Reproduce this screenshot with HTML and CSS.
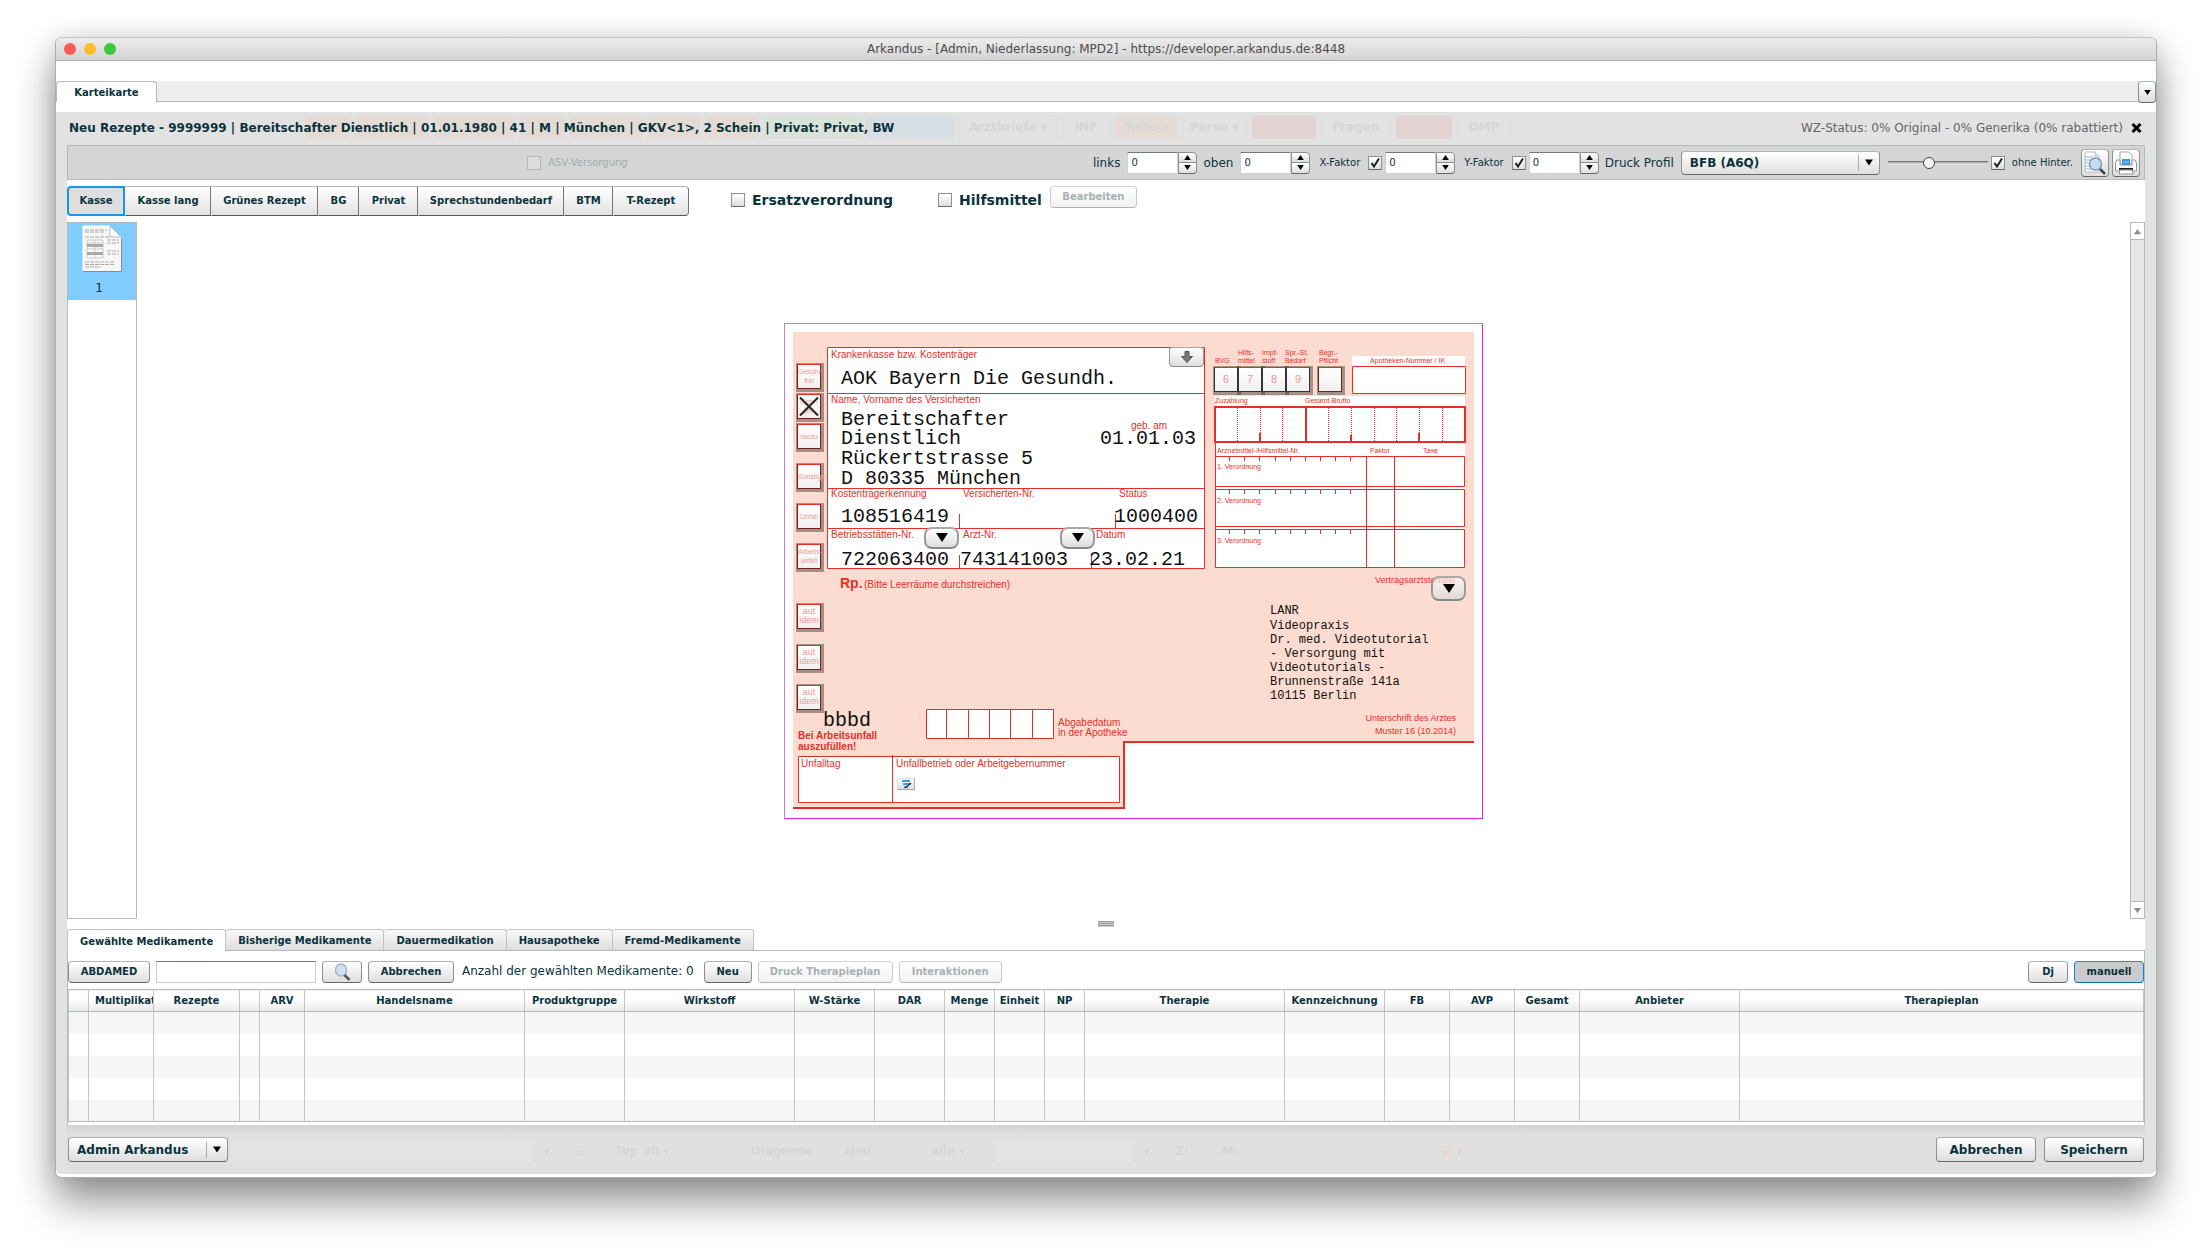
FILE: index.html
```html
<!DOCTYPE html>
<html lang="de">
<head>
<meta charset="utf-8">
<title>Arkandus - [Admin, Niederlassung: MPD2]</title>
<link rel="stylesheet" href="styles.css">
</head>
<body>
<svg class="defs" aria-hidden="true">
  <symbol id="up" viewBox="0 0 8 6"><path d="M0 6 4 0l4 6z"/></symbol>
  <symbol id="down" viewBox="0 0 8 6"><path d="M0 0h8L4 6z"/></symbol>
</svg>
<div class="window">
  <header class="titlebar">
    <span class="lights"><i class="red"></i><i class="yellow"></i><i class="green"></i></span>
    <h1>Arkandus - [Admin, Niederlassung: MPD2] - https://developer.arkandus.de:8448</h1>
  </header>

  <nav class="window-tabs">
    <a class="window-tab" href="#karteikarte">Karteikarte</a>
    <button class="btn tab-list" aria-label="Tabs anzeigen"><svg class="arrow"><use href="#down"/></svg></button>
  </nav>

  <main class="panel" id="karteikarte">
    <div class="patient">
      <div class="backdrop" aria-hidden="true">
        <i class="orange w46"></i><i class="orange w74"></i><i class="orange w82"></i><i class="orange w46"></i><i class="orange w74"></i><i class="orange w54"></i><i class="orange w54"></i><i class="lime w98"></i><i class="blue w90"></i><i class="w98">Arztbriefe ▾</i><i class="w50">INF</i><i class="orange w62">ToDo ▾</i><i class="w66">Perso ▾</i><i class="rose w66"></i><i class="w70">Fragen</i><i class="rose w58"></i><i class="w54">DMP</i>
      </div>
      <h2>Neu Rezepte - 9999999 | Bereitschafter Dienstlich | 01.01.1980 | 41 | M | München | GKV&lt;1&gt;, 2 Schein | Privat: Privat, BW</h2>
      <span class="status">WZ-Status: 0% Original - 0% Generika (0% rabattiert)</span>
      <button class="close" aria-label="Schließen"><svg viewBox="0 0 11 10"><path d="M1.500 1 9.500 9M9.500 1 1.500 9"/></svg></button>
    </div>

    <div class="printbar">
      <label class="asv"><input type="checkbox" disabled> ASV-Versorgung</label>
      <div class="offsets">
        <label for="links">links</label>
        <span class="stepper"><input id="links" type="text" value="0"><span class="steps"><button aria-label="mehr"><svg><use href="#up"/></svg></button><button aria-label="weniger"><svg><use href="#down"/></svg></button></span></span>
        <label for="oben">oben</label>
        <span class="stepper"><input id="oben" type="text" value="0"><span class="steps"><button aria-label="mehr"><svg><use href="#up"/></svg></button><button aria-label="weniger"><svg><use href="#down"/></svg></button></span></span>
        <label class="factor">X-Faktor <input type="checkbox" checked></label>
        <span class="stepper"><input type="text" value="0" aria-label="X-Faktor"><span class="steps"><button aria-label="mehr"><svg><use href="#up"/></svg></button><button aria-label="weniger"><svg><use href="#down"/></svg></button></span></span>
        <label class="factor">Y-Faktor <input type="checkbox" checked></label>
        <span class="stepper"><input type="text" value="0" aria-label="Y-Faktor"><span class="steps"><button aria-label="mehr"><svg><use href="#up"/></svg></button><button aria-label="weniger"><svg><use href="#down"/></svg></button></span></span>
        <label for="profil">Druck Profil</label>
        <span class="combo profile"><select id="profil"><option>BFB (A6Q)</option></select><svg class="arrow"><use href="#down"/></svg></span>
        <input class="slider" type="range" min="0" max="100" value="40" aria-label="Deckkraft">
        <label class="hinter"><input type="checkbox" checked> ohne Hinter.</label>
        <button class="btn tool" aria-label="Vorschau"><svg viewBox="0 0 24 24"><path d="M2 1h10l4 4v16H2z" fill="#fff" stroke="#b8bcc0"/><path d="M12 1v4h4" fill="#eee" stroke="#b8bcc0"/><path d="M2 6h8M2 9h6M2 12h5M2 15h6M2 18h8" stroke="#8fb3dc"/><circle cx="12.500" cy="13" r="6" fill="#bcd6f2" fill-opacity=".85" stroke="#8299b3" stroke-width="1.500"/><path d="m17 18 5 5" stroke="#444" stroke-width="2.500"/></svg></button>
        <button class="btn tool" aria-label="Drucken"><svg viewBox="0 0 24 24"><path d="M6 1h9l3 3v8H6z" fill="#fff" stroke="#aaa"/><path d="M3 9h3v5h12V9h3l1.500 3v8h-21v-8z" fill="#fafafa" stroke="#999"/><path d="M8 8h8v6H8z" fill="#3a97dd"/><path d="M9 11h6" stroke="#9fd0f5"/><path d="M5 17h14v2H5z" fill="#222"/><path d="M6 19h12l1 4H5z" fill="#fff" stroke="#999"/></svg></button>
      </div>
    </div>

    <div class="content">
      <div class="kinds">
        <div class="segments">
          <button class="active">Kasse</button><button>Kasse lang</button><button>Grünes Rezept</button><button>BG</button><button>Privat</button><button>Sprechstundenbedarf</button><button>BTM</button><button>T-Rezept</button>
        </div>
        <label class="option"><input type="checkbox"> Ersatzverordnung</label>
        <label class="option aid"><input type="checkbox"> Hilfsmittel</label>
        <button class="btn edit" disabled>Bearbeiten</button>
      </div>

      <div class="stage">
        <div class="pages">
          <a class="page-item" href="#blatt">
            <svg viewBox="0 0 40 48"><path d="M1 1h27l11 11v34H1z" fill="#f6f6f6" stroke="#fff"/><path d="M1 46.500h38.500V13" stroke="#7f8c96"/><path d="M28 1v11h11z" fill="#fff" stroke="#bbb"/><path d="M3 5h22M3 7h20M3 12h24M25 15h12M25 18h12M25 26h12M25 29h12M3 37h29M3 39.500h29M3 42h16" stroke="#aaa" stroke-dasharray="4 1"/><path d="M5 15h16v18H5zM13 15v18M5 18h16M5 24h16" fill="none" stroke="#ccc"/><path d="M5 20.500h16M5 28.500h16" stroke="#aaa" stroke-width="3"/></svg>
            <span>1</span>
          </a>
        </div>

        <div class="desk">
          <section class="sheet" id="blatt" aria-label="Rezept Muster 16">
            <svg class="print" viewBox="0 0 699 497">
              <path class="paper" d="M9 9h681v410H340v66H9z"/>
              <path class="rule2" d="M690 419H340v66H9"/>
              <g class="box">
                <path d="M43.500 24.500h377v221h-377zM43.500 70.500h377M43.500 165.500h377M43.500 205.500h377M175.500 191v14M331.500 191v14M175.500 232v13M307.500 232v13"/>
                <path d="M568.500 43.500h113v27h-113z"/>
                <path d="M142.500 386.500h127v29h-127zM162.500 386v29M184.500 386v29M205.500 386v29M226.500 386v29M248.500 386v29"/>
                <path d="M14.500 433.500h321v46h-321zM108.500 432v47"/>
              </g>
              <path class="blank" d="M568 33h113v10H568zM431 73h250v10H431zM431 120h250v14H431zM431 164h250v3H431zM431 204h250v3H431z"/>
              <path class="rule2 fill" d="M431 84h250v35H431z"/>
              <path class="rule2" d="M522 84v35M476 110v9M567 112v7M635 110v9"/>
              <path class="dots" d="M453.500 85v34M476.500 85v34M498.500 85v34M544.500 85v34M567.500 85v34M590.500 85v34M612.500 85v34M635.500 85v34M658.500 85v34"/>
              <g class="box">
                <path d="M431.500 133.500h249v30h-249zM431.500 166.500h249v37h-249zM431.500 206.500h249v38h-249z"/>
                <path d="M431.500 119v125M582.500 133v111M610.500 133v111" fill="none"/>
                <path d="M445.500 134v4m15-4v4m15-4v4m16-4v4m15-4v4m15-4v4m15-4v4m15-4v4m15-4v4M445.500 167v4m15-4v4m15-4v4m16-4v4m15-4v4m15-4v4m15-4v4m15-4v4m15-4v4M445.500 207v4m15-4v4m15-4v4m16-4v4m15-4v4m15-4v4m15-4v4m15-4v4m15-4v4"/>
              </g>
              <g class="caption">
                <text x="47" y="35">Krankenkasse bzw. Kostenträger</text>
                <text x="47" y="80">Name, Vorname des Versicherten</text>
                <text x="347" y="106">geb. am</text>
                <text x="47" y="174">Kostenträgerkennung</text>
                <text x="179" y="174">Versicherten-Nr.</text>
                <text x="335" y="174">Status</text>
                <text x="47" y="215">Betriebsstätten-Nr.</text>
                <text x="179" y="215">Arzt-Nr.</text>
                <text x="312" y="215">Datum</text>
                <text class="rp" x="56" y="265">Rp.</text>
                <text x="80" y="265">(Bitte Leerräume durchstreichen)</text>
                <text x="274" y="403">Abgabedatum</text>
                <text x="274" y="413">in der Apotheke</text>
                <text class="strong" x="14" y="416">Bei Arbeitsunfall</text>
                <text class="strong" x="14" y="427">auszufüllen!</text>
                <text x="17" y="444">Unfalltag</text>
                <text x="112" y="444">Unfallbetrieb oder Arbeitgebernummer</text>
              </g>
              <g class="caption mid">
                <text x="591" y="260">Vertragsarztstempel</text>
                <text class="end" x="672" y="398">Unterschrift des Arztes</text>
                <text class="end" x="672" y="411">Muster 16 (10.2014)</text>
              </g>
              <g class="caption small">
                <text x="431" y="40">BVG</text>
                <text x="454" y="32">Hilfs-</text><text x="454" y="40">mittel</text>
                <text x="478" y="32">Impf-</text><text x="478" y="40">stoff</text>
                <text x="501" y="32">Spr.-St.</text><text x="501" y="40">Bedarf</text>
                <text x="535" y="32">Begr.-</text><text x="535" y="40">Pflicht</text>
                <text x="586" y="40">Apotheken-Nummer / IK</text>
                <text x="431" y="80">Zuzahlung</text>
                <text x="521" y="80">Gesamt-Brutto</text>
                <text x="433" y="130">Arzneimittel-/Hilfsmittel-Nr.</text>
                <text x="586" y="130">Faktor</text>
                <text x="639" y="130">Taxe</text>
                <text x="433" y="146">1. Verordnung</text>
                <text x="433" y="180">2. Verordnung</text>
                <text x="433" y="220">3. Verordnung</text>
              </g>
              <g class="typed">
                <text x="57" y="61">AOK Bayern Die Gesundh.</text>
                <text x="57" y="102">Bereitschafter</text>
                <text x="57" y="121">Dienstlich</text>
                <text x="57" y="141">Rückertstrasse 5</text>
                <text x="57" y="161">D 80335 München</text>
                <text x="316" y="121">01.01.03</text>
                <text x="57" y="199">108516419</text>
                <text x="330" y="199">1000400</text>
                <text x="57" y="242">722063400</text>
                <text x="176" y="242">743141003</text>
                <text x="305" y="242">23.02.21</text>
                <text class="code" x="39" y="403">bbbd</text>
              </g>
              <g class="stamp">
                <text x="486" y="291">LANR</text>
                <text x="486" y="306">Videopraxis</text>
                <text x="486" y="320">Dr. med. Videotutorial</text>
                <text x="486" y="334">- Versorgung mit</text>
                <text x="486" y="348">Videotutorials -</text>
                <text x="486" y="362">Brunnenstraße 141a</text>
                <text x="486" y="376">10115 Berlin</text>
              </g>
            </svg>
            <button class="mark m-fee">Gebühr frei</button>
            <button class="mark m-duty">Geb.-pfl.<svg viewBox="0 0 20 20"><path d="M1 1l18 18M19 1 1 19"/></svg></button>
            <button class="mark m-night">noctu</button>
            <button class="mark m-other">Sonstige</button>
            <button class="mark m-accident">Unfall</button>
            <button class="mark m-work">Arbeits-<br>unfall</button>
            <button class="mark aut m-aut1">aut idem</button>
            <button class="mark aut m-aut2">aut idem</button>
            <button class="mark aut m-aut3">aut idem</button>
            <div class="digits"><button class="mark">6</button><button class="mark">7</button><button class="mark">8</button><button class="mark">9</button></div>
            <button class="mark m-duty2" aria-label="Begründungspflicht"></button>
            <button class="btn drop d-payer" aria-label="Kostenträger übernehmen"><svg viewBox="0 0 12 12"><path d="M4 .5h4v5h3.500L6 11.500.500 5.500H4z" fill="#777" stroke="#555"/></svg></button>
            <button class="btn drop d-site" aria-label="Betriebsstätte wählen"><svg viewBox="0 0 12 9"><path d="M0 0h12L6 9z"/></svg></button>
            <button class="btn drop d-doctor" aria-label="Arzt wählen"><svg viewBox="0 0 12 9"><path d="M0 0h12L6 9z"/></svg></button>
            <button class="btn drop d-stamp" aria-label="Stempel wählen"><svg viewBox="0 0 12 9"><path d="M0 0h12L6 9z"/></svg></button>
            <button class="btn d-note" aria-label="Arbeitgeber eintragen"><svg viewBox="0 0 12 10"><path d="M2 1h8v2H2zM3 4h8v2H3zM4 7h4v2H4z" fill="#3d9be0"/><path d="m5 9 6-5" stroke="#246" stroke-width="1.500"/></svg></button>
          </section>
        </div>

        <div class="scrollbar" aria-hidden="true"><span><svg><use href="#up"/></svg></span><span><svg><use href="#down"/></svg></span></div>
      </div>

      <div class="splitter"><i></i></div>

      <nav class="med-tabs">
        <a class="active" href="#gewaehlt">Gewählte Medikamente</a><a href="#bisher">Bisherige Medikamente</a><a href="#dauer">Dauermedikation</a><a href="#haus">Hausapotheke</a><a href="#fremd">Fremd-Medikamente</a>
      </nav>

      <section class="meds" id="gewaehlt">
        <div class="med-tools">
          <button class="btn w82">ABDAMED</button>
          <input class="search" type="text" aria-label="Medikament suchen">
          <button class="btn w40" aria-label="Suchen"><svg class="lens" viewBox="0 0 18 18"><ellipse cx="8" cy="7" rx="5.500" ry="6" fill="#cfe3f5" stroke="#a9b4bd" stroke-width="1.500"/><path d="m11.500 12 5 5" stroke="#555" stroke-width="2.500"/></svg></button>
          <button class="btn w86">Abbrechen</button>
          <span class="count">Anzahl der gewählten Medikamente: 0</span>
          <button class="btn w48">Neu</button>
          <button class="btn w135" disabled>Druck Therapieplan</button>
          <button class="btn w103" disabled>Interaktionen</button>
          <span class="spacer"></span>
          <button class="btn w40">Dj</button>
          <button class="btn w70 pressed">manuell</button>
        </div>
        <table>
          <colgroup><col class="c20"><col class="c65"><col class="c86"><col class="c20"><col class="c45"><col class="c220"><col class="c100"><col class="c170"><col class="c80"><col class="c70"><col class="c50"><col class="c50"><col class="c40"><col class="c200"><col class="c100"><col class="c65"><col class="c65"><col class="c65"><col class="c160"><col></colgroup>
          <thead><tr><th></th><th class="cut">Multiplikator</th><th>Rezepte</th><th></th><th>ARV</th><th>Handelsname</th><th>Produktgruppe</th><th>Wirkstoff</th><th>W-Stärke</th><th>DAR</th><th>Menge</th><th>Einheit</th><th>NP</th><th>Therapie</th><th>Kennzeichnung</th><th>FB</th><th>AVP</th><th>Gesamt</th><th>Anbieter</th><th>Therapieplan</th></tr></thead>
          <tbody>
            <tr><td><td><td><td><td><td><td><td><td><td><td><td><td><td><td><td><td><td><td><td></tr>
            <tr><td><td><td><td><td><td><td><td><td><td><td><td><td><td><td><td><td><td><td><td></tr>
            <tr><td><td><td><td><td><td><td><td><td><td><td><td><td><td><td><td><td><td><td><td></tr>
            <tr><td><td><td><td><td><td><td><td><td><td><td><td><td><td><td><td><td><td><td><td></tr>
            <tr><td><td><td><td><td><td><td><td><td><td><td><td><td><td><td><td><td><td><td><td></tr>
          </tbody>
        </table>
      </section>
    </div>

    <footer class="actions">
      <div class="backdrop" aria-hidden="true">
        <i class="field w304"></i><i class="w16">▾</i><i class="w40">☷</i><i class="w70">Top 30 ▾</i><i class="gap"></i><i class="w86">Diagnose</i><i class="w54">Neu</i><i class="gap none"></i><i class="w82">alle ▾</i><i class="field w138"></i><i class="w16">▾</i><b>Z:</b><b>M:</b><i class="gap wide"></i><i class="rose-line w58">☑ ▾</i>
      </div>
      <span class="combo user"><select aria-label="Benutzer"><option>Admin Arkandus</option></select><svg class="arrow"><use href="#down"/></svg></span>
      <span class="spacer"></span>
      <button class="btn big">Abbrechen</button>
      <button class="btn big">Speichern</button>
    </footer>
  </main>
</div>
</body>
</html>
```
FILE: styles.css
```css
:root {
  --ink: #0b333c;
  --line: #b3b8b8;
  --red: #e5302a;
  --sans: "DejaVu Sans", Verdana, sans-serif;
}
* { box-sizing: border-box; }
body {
  margin: 0;
  min-height: 100vh;
  padding: 37px 55px 74px;
  display: flex;
  flex-direction: column;
  background: #fff;
  color: var(--ink);
  font: 10px/14px var(--sans);
}
button, input, select { font: inherit; color: inherit; margin: 0; }
button { padding: 0; }
a { color: inherit; text-decoration: none; }
h1, h2 { margin: 0; }
svg { fill: none; }
.defs { position: absolute; width: 0; height: 0; }
.spacer { flex: 1; }

.window {
  flex: 1;
  display: flex;
  flex-direction: column;
  border: 1px solid #a9afaf;
  border-top-color: #c4c4c4;
  border-radius: 6px;
  background: #fff;
  box-shadow: 0 24px 40px rgba(0, 0, 0, .42), 0 0 24px rgba(0, 0, 0, .12);
  padding-bottom: 3px;
}
.titlebar {
  position: relative;
  height: 23px;
  display: flex;
  align-items: center;
  justify-content: center;
  border-bottom: 1px solid #adadad;
  border-radius: 5px 5px 0 0;
  background: linear-gradient(#ececec, #d4d4d4);
}
.titlebar h1 { font: 12px/20px var(--sans); color: #4c4c4c; }
.lights { position: absolute; left: 8px; top: 5px; display: flex; gap: 8px; }
.lights i { width: 12px; height: 12px; border-radius: 50%; }
.red { background: #fc5b57; }
.yellow { background: #fdbc2e; }
.green { background: #3cc840; }

.window-tabs {
  margin-top: 20px;
  height: 21px;
  display: flex;
  justify-content: space-between;
  background: #ededed;
  border-bottom: 1px solid var(--line);
}
.window-tab {
  width: 101px;
  height: 21px;
  border: 1px solid var(--line);
  border-bottom: 0;
  border-radius: 4px 4px 0 0;
  background: #fff;
  font-weight: bold;
  line-height: 22px;
  text-align: center;
}
.tab-list.btn { width: 18px; height: 22px; }

.btn {
  height: 22px;
  display: inline-flex;
  align-items: center;
  justify-content: center;
  border: 1px solid #9a9e9e;
  border-color: #b0b4b4 #8b9090 #666;
  border-radius: 4px;
  background: linear-gradient(#fff, #dedede);
  font-weight: bold;
  white-space: nowrap;
}
.btn:disabled { color: #a9b2b3; border-color: #d4d6d6 #c8caca #b0b2b2; background: linear-gradient(#fff, #f2f2f2); }
.btn.pressed { border-color: #0a94ee #0a85d8 #0a6eb4; background: #cbcbcb; }
.arrow { width: 7px; height: 5px; fill: #000; }

.panel {
  margin-top: 10px;
  flex: 1;
  padding: 0 11px;
  display: flex;
  flex-direction: column;
  background: #e2e2e2;
  border-radius: 0 0 5px 5px;
}
.patient { position: relative; height: 33px; padding: 0 3px 2px 2px; display: flex; align-items: center; }
.patient h2 { flex: 1; font-size: 12px; line-height: 16px; position: relative; }
.status { position: relative; font-size: 12px; color: #636666; }
.close { position: relative; width: 11px; height: 10px; margin-left: 8px; border: 0; background: none; display: flex; }
.close svg { width: 11px; height: 10px; stroke: #000; stroke-width: 3; }

.backdrop { position: absolute; inset: 3px 0 auto 238px; height: 24px; display: flex; gap: 4px; font-weight: bold; font-size: 12px; color: #d5d6d6; }
.backdrop i { height: 24px; line-height: 22px; text-align: center; font-style: normal; white-space: nowrap; border: 1px solid #dedede; border-radius: 4px; }
.backdrop .orange { background: #e4dcd4; }
.backdrop .lime { background: #dae3d8; }
.backdrop .blue { background: #d6dfe3; }
.backdrop .rose { background: #e3d2d2; }
.backdrop .field { background: #e4e4e4; }
.backdrop .rose-line { color: #e6cfcc; }
.backdrop .gap { width: 50px; border: 0; }
.backdrop .none { width: 10px; }
.backdrop .wide { width: 160px; border: 0; }
.backdrop b { width: 42px; line-height: 24px; text-align: center; }
.w16 { width: 16px; } .w40 { width: 40px; } .w46 { width: 46px; } .w48 { width: 48px; }
.w50 { width: 50px; } .w54 { width: 54px; } .w58 { width: 58px; } .w62 { width: 62px; }
.w66 { width: 66px; } .w70 { width: 70px; } .w74 { width: 74px; } .w82 { width: 82px; }
.w86 { width: 86px; } .w90 { width: 90px; } .w98 { width: 98px; } .w103 { width: 103px; }
.w135 { width: 135px; } .w138 { width: 138px; } .w304 { width: 304px; }

.printbar {
  height: 35px;
  padding-right: 4px;
  display: flex;
  align-items: center;
  border: 1px solid var(--line);
  background: #d5d5d5;
}
input[type="checkbox"] {
  appearance: none;
  width: 14px;
  height: 14px;
  flex: none;
  border: 1px solid #8b9090;
  border-bottom-color: #666;
  background: linear-gradient(#fff, #dedede);
}
input[type="checkbox"]:checked {
  background: url("data:image/svg+xml,%3Csvg xmlns='http://www.w3.org/2000/svg' viewBox='0 0 12 12'%3E%3Cpath d='M2.500 6 5 9.500 10 1.500' fill='none' stroke='%23222' stroke-width='2'/%3E%3C/svg%3E"), linear-gradient(#fff, #dedede);
}
input[type="checkbox"]:disabled { border-color: #b4b8b8; background: #dcdcdc; }
.asv { flex: 1; display: flex; justify-content: center; align-items: center; gap: 7px; color: #a4abab; }
.offsets { display: flex; align-items: center; font-size: 12px; }
.offsets > label { margin: 0 7px 0 6px; }
.offsets > label.factor { display: flex; align-items: center; gap: 8px; margin: 0 3px 0 9px; font-size: 10px; }
.stepper { display: flex; width: 70px; height: 22px; }
.stepper input { width: 51px; padding: 0 0 0 3px; border: 1px solid #d0d0d0; border-top-color: #777; background: #fff; font-size: 10px; }
.steps { width: 19px; display: flex; flex-direction: column; }
.steps button { flex: 1; display: flex; align-items: center; justify-content: center; border: 1px solid #8b9090; background: linear-gradient(#fff, #dedede); }
.steps button:first-child { border-radius: 0 4px 0 0; }
.steps button:last-child { border-top: 0; border-radius: 0 0 4px 0; border-bottom-color: #666; }
.steps svg { width: 7px; height: 5px; fill: #000; }
.combo { display: inline-grid; align-items: center; }
.combo > * { grid-area: 1 / 1; }
.combo select {
  appearance: none;
  width: 100%;
  height: 24px;
  padding: 0 24px 0 8px;
  border: 1px solid #8b9090;
  border-color: #b0b4b4 #8b9090 #666;
  border-radius: 4px;
  background: linear-gradient(90deg, transparent calc(100% - 21px), #a8acac calc(100% - 21px), #a8acac calc(100% - 20px), transparent calc(100% - 20px)) center / 100% 16px no-repeat, linear-gradient(#fff, #dedede);
  font-size: 12px;
  font-weight: bold;
}
.combo .arrow { justify-self: end; margin-right: 7px; width: 8px; height: 7px; }
.profile { width: 199px; }
.slider { appearance: none; width: 100px; height: 12px; margin: 0 3px 0 8px; background: linear-gradient(#777, #777 1px, #aaa 1px, #eee) center / 100% 4px no-repeat; }
.slider::-webkit-slider-thumb { appearance: none; width: 12px; height: 12px; border: 1px solid #444; border-radius: 50%; background: #f4f4f4; }
.offsets > label.hinter { display: flex; align-items: center; gap: 7px; margin: 0 8px 0 0; font-size: 10px; }
.btn.tool { width: 28px; height: 28px; margin-right: 3px; }
.btn.tool:last-child { margin-right: 0; }
.tool svg { width: 24px; height: 24px; }

.content { flex: 1; display: flex; flex-direction: column; background: #fff; }
.kinds { padding: 6px 0; display: flex; align-items: flex-start; }
.segments { display: grid; grid-template-columns: 58px 86px 107px 41px 59px 146px 49px 76px; }
.segments button {
  height: 30px;
  border: 1px solid #9a9e9e;
  border-color: #b0b4b4 #777 #555 transparent;
  background: linear-gradient(#fff, #e2e2e2);
  font-weight: bold;
}
.segments .active { border: 2px solid #1d93e6; border-radius: 4px 0 0 4px; background: #dedede; }
.segments button:last-child { border-radius: 0 4px 4px 0; }
.option { display: flex; align-items: center; gap: 7px; height: 28px; margin-left: 42px; font-size: 14px; font-weight: bold; }
.option.aid { margin-left: 45px; }
.edit { width: 87px; margin-left: 8px; }

.stage { flex: 1; display: flex; }
.pages { width: 70px; border: 1px solid var(--line); }
.page-item { height: 77px; padding-top: 2px; display: flex; flex-direction: column; align-items: center; gap: 8px; background: #80ccff; font-size: 12px; }
.page-item svg { width: 40px; height: 48px; }
.page-item span { margin-right: 6px; }
.desk { flex: 1; display: flex; align-items: center; justify-content: center; }
.scrollbar { width: 15px; display: flex; flex-direction: column; justify-content: space-between; border: 1px solid var(--line); background: #e6e6e6; }
.scrollbar span { height: 17px; display: flex; align-items: center; justify-content: center; background: #fff; border-bottom: 1px solid var(--line); }
.scrollbar span:last-child { border-bottom: 0; border-top: 1px solid var(--line); }
.scrollbar svg { width: 7px; height: 7px; fill: #8d8d8d; }

/* Muster 16: a printed form, every field sits at its place on the paper */
.sheet { position: relative; width: 699px; height: 496px; border: 1px solid #c07fd0; border-right-color: #ee1fee; border-bottom-color: #ee1fee; }
.sheet > * { position: absolute; }
.print { left: -1px; top: -1px; width: 699px; height: 497px; }
.paper { fill: #fcdcd0; }
.blank { fill: #fff; }
.box path { fill: #fff; stroke: var(--red); }
.rule2 { stroke: var(--red); stroke-width: 2; }
.rule2.fill { fill: #fff; }
.dots { stroke: var(--red); stroke-dasharray: 1 1; }
.caption { font: 10px "Liberation Sans", Arial, sans-serif; fill: var(--red); }
.caption.mid { font-size: 9px; }
.caption.small { font-size: 7px; }
.caption .rp { font-size: 14px; font-weight: bold; }
.caption .strong { font-weight: bold; }
.caption .end { text-anchor: end; }
.typed { font: 20px "Liberation Mono", "Courier New", monospace; fill: #111; }
.stamp { font: 12px "Liberation Mono", "Courier New", monospace; fill: #111; }

.mark {
  width: 24px;
  height: 25px;
  border: 1px solid #7a1f1c;
  border-top-color: var(--red);
  background: linear-gradient(#fff, #f0f0f0);
  box-shadow: 1px 1px 0 2px rgba(60, 50, 45, .45);
  font: 7px/9px "Liberation Sans", Arial, sans-serif;
  color: #ee9a94;
}
.mark.aut { font-size: 9px; }
.mark svg { position: absolute; inset: 1px; width: 20px; height: 21px; stroke: #222; stroke-width: 2; }
.m-fee { left: 12px; top: 40px; }
.m-duty { left: 12px; top: 70px; }
.m-night { left: 12px; top: 100px; }
.m-other { left: 12px; top: 140px; }
.m-accident { left: 12px; top: 180px; }
.m-work { left: 12px; top: 220px; }
.m-aut1 { left: 12px; top: 280px; }
.m-aut2 { left: 12px; top: 321px; }
.m-aut3 { left: 12px; top: 361px; }
.digits { left: 429px; top: 43px; display: flex; }
.digits .mark { font-size: 11px; border-color: #e5302a #333 #333; }
.m-duty2 { left: 533px; top: 43px; }
.drop.btn { width: 35px; height: 22px; border-radius: 8px; border-width: 2px; border-color: #aaa #999 #888; }
.drop svg { width: 12px; height: 9px; fill: #000; }
.drop.d-payer { left: 384px; top: 23px; height: 20px; border-radius: 4px; border-width: 1px; }
.d-payer svg { height: 12px; }
.d-site { left: 139px; top: 203px; }
.d-doctor { left: 275px; top: 203px; }
.drop.d-stamp { left: 646px; top: 252px; height: 25px; background: linear-gradient(rgba(255, 255, 255, .6), #e2dad6); }
.btn.d-note { left: 112px; top: 454px; width: 18px; height: 12px; border-color: #ddd #aaa #aaa #ddd; border-radius: 0; }
.d-note svg { width: 12px; height: 10px; }

.splitter { height: 10px; display: flex; justify-content: center; align-items: center; }
.splitter i { width: 16px; height: 6px; background: repeating-linear-gradient(#999 0 1px, #ccc 1px 2px); }

.med-tabs { display: flex; border-bottom: 1px solid var(--line); }
.med-tabs a { height: 21px; padding: 0 12px; border: 1px solid #c0c4c4; border-width: 1px 1px 0 0; border-radius: 3px 3px 0 0; background: linear-gradient(#fafafa, #dedede); font-weight: bold; line-height: 21px; white-space: nowrap; }
.med-tabs .active { height: 22px; margin-bottom: -1px; border-left-width: 1px; background: #fff; line-height: 23px; }
.meds { padding: 10px 0 3px; border: 1px solid var(--line); border-width: 0 1px; }
.med-tools { display: flex; align-items: center; gap: 6px; margin-bottom: 6px; }
.search { width: 160px; height: 22px; border: 1px solid #ccc; border-top-color: #777; }
.lens { width: 18px; height: 18px; }
.count { margin: 0 4px 2px 2px; font-size: 12px; white-space: nowrap; }

table { width: 100%; table-layout: fixed; border-collapse: collapse; border: 1px solid var(--line); }
th, td { height: 22px; padding: 0; border: 1px solid #c4c6c6; border-width: 0 1px; }
th { border-bottom: 1px solid var(--line); background: linear-gradient(#fff 40%, #e8e8e8); line-height: 21px; white-space: nowrap; overflow: hidden; }
th.cut { padding-left: 6px; text-align: left; }
tbody tr:nth-child(odd) { background: #f6f6f6; }
.c20 { width: 20px; } .c40 { width: 40px; } .c45 { width: 45px; } .c50 { width: 50px; }
.c65 { width: 65px; } .c70 { width: 70px; } .c80 { width: 80px; } .c86 { width: 86px; }
.c100 { width: 100px; } .c160 { width: 160px; } .c170 { width: 170px; }
.c200 { width: 200px; } .c220 { width: 220px; }

.actions { position: relative; height: 49px; padding: 12px 1px 0; display: flex; align-items: flex-start; gap: 8px; background: linear-gradient(#d4d4d4, #e0e0e0 10px); }
.actions .backdrop { inset: 14px auto auto 162px; gap: 6px; }
.user { position: relative; width: 160px; }
.user select { height: 25px; }
.btn.big { position: relative; width: 100px; height: 25px; font-size: 12px; }
```
